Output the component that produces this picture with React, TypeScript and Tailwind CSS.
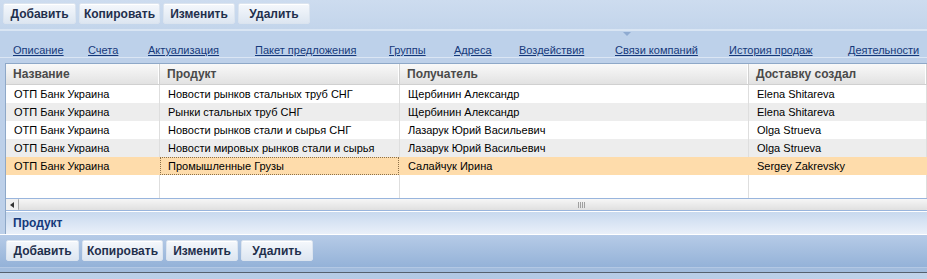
const font = "font-['Liberation_Sans',Tahoma,Arial,sans-serif]";

const topButtons = [
  { label: 'Добавить', w: 'w-[73px]' },
  { label: 'Копировать', w: 'w-[81px]' },
  { label: 'Изменить', w: 'w-[72px]' },
  { label: 'Удалить', w: 'w-[72px]' },
];

const tabs = [
  { label: 'Описание', w: 'w-[75px]' },
  { label: 'Счета', w: 'w-[60px]' },
  { label: 'Актуализация', w: 'w-[107px]' },
  { label: 'Пакет предложения', w: 'w-[134px]' },
  { label: 'Группы', w: 'w-[65px]' },
  { label: 'Адреса', w: 'w-[65px]' },
  { label: 'Воздействия', w: 'w-[96px]' },
  { label: 'Связи компаний', w: 'w-[114px]' },
  { label: 'История продаж', w: 'w-[119px]' },
  { label: 'Деятельности', w: 'w-[80px]' },
];

const rows = [
  ['ОТП Банк Украина', 'Новости рынков стальных труб СНГ', 'Щербинин Александр', 'Elena Shitareva'],
  ['ОТП Банк Украина', 'Рынки стальных труб СНГ', 'Щербинин Александр', 'Elena Shitareva'],
  ['ОТП Банк Украина', 'Новости рынков стали и сырья СНГ', 'Лазарук Юрий Васильевич', 'Olga Strueva'],
  ['ОТП Банк Украина', 'Новости мировых рынков стали и сырья', 'Лазарук Юрий Васильевич', 'Olga Strueva'],
  ['ОТП Банк Украина', 'Промышленные Грузы', 'Салайчук Ирина', 'Sergey Zakrevsky'],
];

const cols = ['w-[154px]', 'w-[240px]', 'w-[349px]', 'flex-1'];

function ToolButtons({ className }: { className: string }) {
  return (
    <div className={`flex gap-[3px] ${className}`}>
      {topButtons.map((b) => (
        <button
          key={b.label}
          className={`${b.w} h-[21px] rounded-[2px] border border-[#dbe4ef] bg-gradient-to-b from-[#f5f8fc] to-[#dde6f1] text-[12px] font-bold text-[#1f2f4c] shadow-[inset_0_1px_0_#ffffff]`}
        >
          {b.label}
        </button>
      ))}
    </div>
  );
}

export default function App() {
  return (
    <div className={`w-[927px] h-[279px] overflow-hidden bg-[#bdd0e9] ${font}`}>
      {/* top toolbar */}
      <div className="h-[29px] bg-gradient-to-b from-[#cddcef] to-[#c3d5eb]">
        <ToolButtons className="pl-[3px] pt-[3px]" />
      </div>
      <div className="h-[2px] bg-[#d9e5f3]" />

      {/* tabs */}
      <div className="relative h-[26px] flex items-start pt-[6px] pl-[13px] bg-[#bdd1ea]">
        {/* active tab marker */}
        <span className="absolute left-[623px] top-[1px] w-0 h-0 border-l-[4px] border-r-[4px] border-t-[4px] border-l-transparent border-r-transparent border-t-[#8fabd1]" />
        {tabs.map((t) => (
          <div key={t.label} className={`${t.w} shrink-0`}>
            <a className="text-[11px] text-[#16397a] underline whitespace-nowrap cursor-pointer">{t.label}</a>
          </div>
        ))}
      </div>
      <div className="h-[1px] bg-[#dbe6f4]" />
      <div className="h-[5px]" />

      {/* grid panel */}
      <div className="ml-[5px] border-l border-t border-[#8ea8c8] bg-white">
        <div className="flex h-[21px] bg-gradient-to-b from-[#f9f9f9] to-[#e2e2e2] border-b border-[#d0d0d0]">
          {['Название', 'Продукт', 'Получатель', 'Доставку создал'].map((h, i) => (
            <div
              key={h}
              className={`${cols[i]} shrink-0 flex items-center pl-[7px] text-[12px] font-bold text-[#4a4a4a] border-r border-[#d0d0d0] shadow-[inset_-1px_0_0_#ffffff]`}
            >
              {h}
            </div>
          ))}
        </div>
        {rows.map((r, ri) => {
          const selected = ri === 4;
          const bg = selected ? 'bg-[#fedcab]' : ri % 2 === 1 ? 'bg-[#ededed]' : 'bg-white';
          return (
            <div key={ri} className={`flex h-[18px] ${bg}`}>
              {r.map((c, ci) => (
                <div
                  key={ci}
                  className={`${cols[ci]} shrink-0 h-full text-[11px] text-black border-r ${selected ? 'border-[#fedcab]' : 'border-[#dedede]'}`}
                >
                  {selected && ci === 1 ? (
                    <div className="h-full flex items-center pl-[7px] border border-dotted border-[#8c7048]">{c}</div>
                  ) : (
                    <div className="h-full flex items-center pl-[8px]">{c}</div>
                  )}
                </div>
              ))}
            </div>
          );
        })}
        <div className="flex h-[23px]">
          {cols.map((c, i) => (
            <div key={i} className={`${c} shrink-0 h-full border-r border-[#dedede]`} />
          ))}
        </div>

        {/* horizontal scrollbar */}
        <div className="flex h-[13px] border-t border-b border-[#99b5dd] bg-[#f0f0f0]">
          <div className="w-[12px] shrink-0 flex items-center justify-center">
            <span className="w-0 h-0 border-t-[3px] border-b-[3px] border-r-[4px] border-t-transparent border-b-transparent border-r-[#333]" />
          </div>
          <div className="flex-1 flex items-center pl-[559px] border-l border-[#a8a8a8] rounded-[1px] bg-gradient-to-b from-[#f6f6f6] to-[#e0e0e0]">
            <span className="flex gap-[1px]">
              <span className="w-[1px] h-[6px] bg-[#a0a0a0]" />
              <span className="w-[1px] h-[6px] bg-[#a0a0a0]" />
              <span className="w-[1px] h-[6px] bg-[#a0a0a0]" />
              <span className="w-[1px] h-[6px] bg-[#a0a0a0]" />
            </span>
          </div>
        </div>

        {/* detail panel header */}
        <div className="h-[23px] flex items-center pl-[7px] border-t border-white bg-gradient-to-b from-[#c8d9ee] to-[#eaf0f9]">
          <span className="text-[12px] font-bold text-[#15397a]">Продукт</span>
        </div>
      </div>
      <div className="h-[1px] bg-white" />

      {/* bottom toolbar */}
      <div className="h-[32px] bg-gradient-to-b from-[#b6cbe7] to-[#94b2d8]">
        <ToolButtons className="pl-[6px] pt-[5px]" />
      </div>
      <div className="h-[1px] bg-[#b3c8e4]" />
      <div className="h-[4px] bg-[#a2bcdd]" />
      <div className="h-[1px] bg-[#55606e]" />
      <div className="h-[8px] bg-gradient-to-r from-[#c0d3ea] via-[#b2c8e4] to-[#c0d3ea]" />
    </div>
  );
}
